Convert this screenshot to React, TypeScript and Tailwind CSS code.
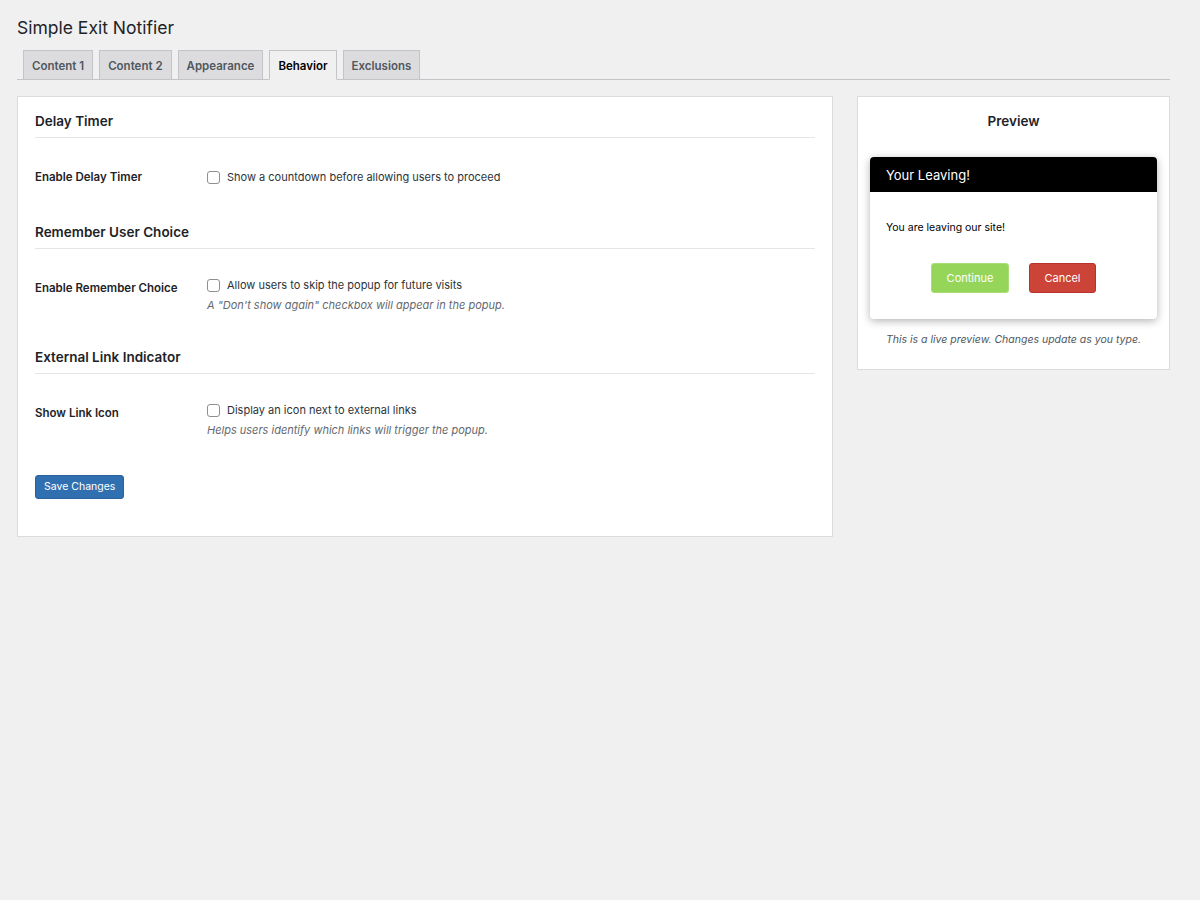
import { ReactNode } from "react";

const tabs = ["Content 1", "Content 2", "Appearance", "Behavior", "Exclusions"];

function Section({ title, children }: { title: string; children: ReactNode }) {
  return (
    <div>
      <h2 className="border-b border-[#e5e5e5] pb-[7px] text-[13.5px] font-semibold leading-[17px] text-[#1d2327]">{title}</h2>
      {children}
    </div>
  );
}

function Row({ label, text, hint }: { label: string; text: string; hint?: string }) {
  return (
    <div className={`flex pt-[29px] ${hint ? "pb-[37px]" : "pb-[40px]"}`}>
      <div className="mt-[3px] w-[172px] shrink-0 text-[11.5px] font-semibold leading-[14px] text-[#1d2327]">{label}</div>
      <div className={hint ? "" : "mt-[3px]"}>
        <label className="flex items-center gap-[7px] text-[11px] leading-[14px] text-[#2c3338]">
          <span className="h-[13px] w-[13px] rounded-[3px] border border-[#8c8f94] bg-white" />
          {text}
        </label>
        {hint && <p className="mt-[7px] text-[11px] italic leading-[13px] text-[#646970]">{hint}</p>}
      </div>
    </div>
  );
}

export default function App() {
  return (
    <div className="min-h-[900px] bg-[#f0f0f1] pl-[17px] pr-[30px] pt-[16px] font-['Inter','Liberation_Sans',sans-serif] text-[#1d2327]">
      <h1 className="text-[17.5px] font-normal leading-[24px] text-[#1d2327]">Simple Exit Notifier</h1>

      <div className="mt-[10px] flex gap-[6px] border-b border-[#c3c4c7] pl-[6px]">
        {tabs.map((t) => (
          <div
            key={t}
            className={`-mb-px h-[30px] border border-[#c3c4c7] px-[8px] pt-[8px] text-[11.5px] font-semibold leading-[14px] ${
              t === "Behavior" ? "border-b-[#f0f0f1] bg-[#f0f0f1] text-black" : "bg-[#dcdcde] text-[#50575e]"
            }`}
          >
            {t}
          </div>
        ))}
      </div>

      <div className="mt-[16px] flex items-start gap-[24px]">
        <div className="w-[816px] shrink-0 border border-[#dcdcde] bg-white px-[17px] pb-[37px] pt-[16px]">
          <Section title="Delay Timer">
            <Row label="Enable Delay Timer" text="Show a countdown before allowing users to proceed" />
          </Section>
          <Section title="Remember User Choice">
            <Row
              label="Enable Remember Choice"
              text="Allow users to skip the popup for future visits"
              hint={`A "Don't show again" checkbox will appear in the popup.`}
            />
          </Section>
          <Section title="External Link Indicator">
            <Row
              label="Show Link Icon"
              text="Display an icon next to external links"
              hint="Helps users identify which links will trigger the popup."
            />
          </Section>
          <button className="mt-[1px] block h-[24px] rounded-[3px] border border-[#2a62a0] bg-[#3070b0] px-[8px] text-[10.5px] leading-[14px] text-white">
            Save Changes
          </button>
        </div>

        <div className="flex-1 border border-[#dcdcde] bg-white px-[12px] pb-[23px] pt-[16px]">
          <h2 className="text-center text-[13.5px] font-semibold leading-[17px] text-[#1d2327]">Preview</h2>
          <div className="mt-[27px] overflow-hidden rounded-[4px] bg-white shadow-[0_2px_8px_rgba(0,0,0,0.3)]">
            <div className="flex h-[35px] items-center bg-black px-[16px] text-[13px] leading-[18px] text-white">Your Leaving!</div>
            <div className="px-[16px] pb-[26px] pt-[29px]">
              <p className="text-[10.5px] leading-[14px] text-black">You are leaving our site!</p>
              <div className="mt-[28px] flex justify-center gap-[20px]">
                <button className="h-[30px] w-[78px] rounded-[3px] border border-[#a8df78] bg-[#95d55a] text-[11px] text-white">Continue</button>
                <button className="h-[30px] w-[67px] rounded-[3px] border border-[#b8332b] bg-[#cc4337] text-[11px] text-white">Cancel</button>
              </div>
            </div>
          </div>
          <p className="mt-[14px] text-center text-[10.5px] italic leading-[13px] text-[#50575e]">
            This is a live preview. Changes update as you type.
          </p>
        </div>
      </div>
    </div>
  );
}
